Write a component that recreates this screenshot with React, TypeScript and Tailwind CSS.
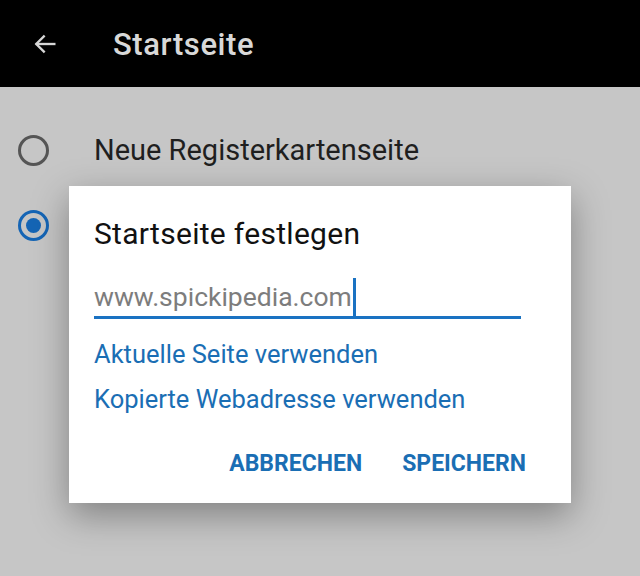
import React from "react";

export default function App() {
  return (
    <div className="relative w-[640px] h-[576px] overflow-hidden bg-[#c6c6c6]" style={{ fontFamily: "Roboto, 'Noto Sans', sans-serif" }}>
      <div className="h-[87px] bg-black flex items-center">
        <div className="w-[113px] flex justify-center pr-[24px]">
          <svg width="28" height="28" viewBox="0 0 24 24" fill="none" stroke="#d6d6d6" strokeWidth="2" strokeLinecap="square">
            <path d="M20 12H5" />
            <path d="M11 5.5L4.5 12L11 18.5" />
          </svg>
        </div>
        <div className="text-[31px] font-medium text-[#d8d8d8] leading-none tracking-[0.6px] mt-[2px]">Startseite</div>
      </div>
      <div className="flex flex-col">
        <div className="flex items-center h-[75px] mt-[26px]">
          <div className="w-[94px] flex justify-start pl-[18px]">
            <div className="w-[31px] h-[31px] rounded-full border-[3px] border-[#555555]" />
          </div>
          <div className="text-[29px] text-[#1f1f1f] leading-none">Neue Registerkartenseite</div>
        </div>
        <div className="flex items-center h-[75px]">
          <div className="w-[94px] flex justify-start pl-[18px]">
            <div className="w-[31px] h-[31px] rounded-full border-[3px] border-[#1565b5] flex items-center justify-center">
              <div className="w-[15px] h-[15px] rounded-full bg-[#1565b5]" />
            </div>
          </div>
        </div>
      </div>
      <div className="absolute left-[69px] top-[186px] w-[502px] h-[317px] bg-white shadow-[0_12px_34px_rgba(0,0,0,0.35)] flex flex-col pl-[25px] pr-[50px]">
        <div className="text-[30px] text-[#111] leading-none mt-[33px] tracking-[0.3px]">Startseite festlegen</div>
        <div className="mt-[29px] h-[41px] border-b-[3px] border-[#1a72c2] flex items-end pb-[6px]">
          <span className="text-[26.5px] text-[#7d7d7d] leading-none">www.spickipedia.com</span>
          <span className="w-[3px] h-[38px] bg-[#1a72c2] ml-[1px] mb-[-6px] self-end" />
        </div>
        <div className="text-[25.5px] text-[#1a6eb4] leading-none mt-[23px]">Aktuelle Seite verwenden</div>
        <div className="text-[25.5px] text-[#1a6eb4] leading-none mt-[19px]">Kopierte Webadresse verwenden</div>
        <div className="flex justify-end gap-[40px] mt-[40px] mr-[-5px]">
          <span className="text-[23px] font-bold text-[#1a6eb4] leading-none">ABBRECHEN</span>
          <span className="text-[23px] font-bold text-[#1a6eb4] leading-none">SPEICHERN</span>
        </div>
      </div>
    </div>
  );
}
